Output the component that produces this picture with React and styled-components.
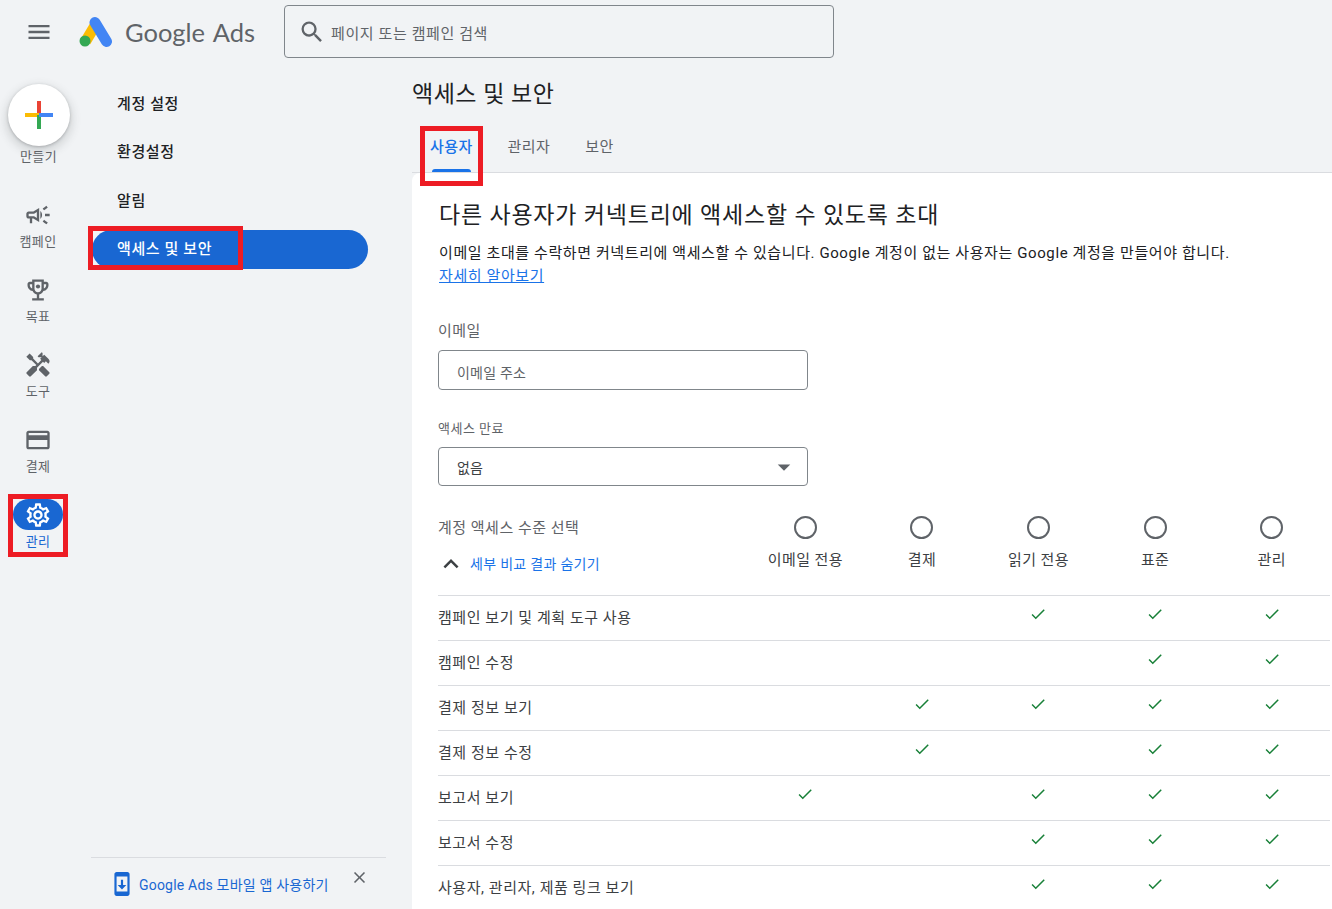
import React from "react";
import styled, { createGlobalStyle } from "styled-components";
import {
  MdMenu,
  MdSearch,
  MdOutlineCampaign,
  MdHandyman,
  MdCreditCard,
  MdOutlineSettings,
  MdExpandLess,
  MdCheck,
  MdClose,
  MdArrowDropDown,
  MdSystemUpdate,
} from "react-icons/md";

const GlobalStyle = createGlobalStyle`
  html, body {
    margin: 0;
    padding: 0;
    background: #f1f3f4;
  }
  body {
    font-family: Roboto, "Noto Sans CJK KR", sans-serif;
    color: #202124;
  }
`;

const Page = styled.div`
  width: 1332px;
  height: 909px;
  overflow: hidden;
  display: flex;
  flex-direction: column;
  background: #f1f3f5;
`;

const Header = styled.header`
  height: 63px;
  flex: none;
  display: flex;
  align-items: center;
  padding-left: 25px;
  box-sizing: border-box;
`;

const MenuButton = styled.div`
  width: 28px;
  height: 28px;
  color: #5f6368;
  display: flex;
  font-size: 28px;
  margin-right: 26px;
`;

const LogoMark = styled.svg`
  width: 34px;
  height: 32px;
  flex: none;
  margin-right: 12px;
`;

const LogoText = styled.div`
  font-family: Lato, sans-serif;
  font-size: 25.5px;
  color: #5f6368;
  width: 159px;
  white-space: nowrap;
  word-spacing: 2px;
`;

const SearchBox = styled.div`
  width: 550px;
  height: 53px;
  box-sizing: border-box;
  border: 1px solid #80868b;
  border-radius: 4px;
  display: flex;
  align-items: center;
  padding-left: 13px;
  gap: 5px;
  color: #5f6368;
  font-size: 15px;
  letter-spacing: 0.6px;
`;

const SearchText = styled.span`
  padding-top: 2px;
`;

const Body = styled.div`
  flex: 1;
  display: flex;
  min-height: 0;
`;

const Rail = styled.nav`
  width: 76px;
  flex: none;
  display: flex;
  flex-direction: column;
  align-items: center;
  padding-top: 21px;
  box-sizing: border-box;
`;

const Fab = styled.div`
  width: 62px;
  height: 62px;
  margin-left: 2px;
  border-radius: 50%;
  background: #fff;
  box-shadow: 0 1px 3px rgba(60, 64, 67, 0.3), 0 4px 8px 3px rgba(60, 64, 67, 0.15);
  display: flex;
  align-items: center;
  justify-content: center;
  flex: none;
`;

const FabLabel = styled.div`
  font-size: 13px;
  letter-spacing: 0.3px;
  line-height: 18px;
  color: #5f6368;
  margin: 2px 0 33px 1px;
`;

const RailItem = styled.div`
  position: relative;
  height: 75px;
  flex: none;
  display: flex;
  flex-direction: column;
  align-items: center;
  font-size: 13px;
  letter-spacing: 0.3px;
  line-height: 18px;
  color: ${(p) => (p.$active ? "#1967d2" : "#5f6368")};
`;

const RailIcon = styled.div`
  width: 50px;
  height: 31px;
  border-radius: 16px;
  display: flex;
  align-items: center;
  justify-content: center;
  font-size: 28px;
  margin-bottom: 3px;
  background: ${(p) => (p.$active ? "#1967d2" : "transparent")};
  color: ${(p) => (p.$active ? "#fff" : "#5f6368")};
`;

const RailCallout = styled.div`
  position: absolute;
  left: -5px;
  top: -5px;
  width: 60px;
  height: 63px;
  box-sizing: border-box;
  border: 5px solid #ed1c24;
`;

const SubNav = styled.aside`
  width: 336px;
  flex: none;
  display: flex;
  flex-direction: column;
  padding: 21px 44px 0 16px;
  box-sizing: border-box;
  gap: 9.5px;
`;

const NavItem = styled.div`
  position: relative;
  height: 39px;
  flex: none;
  border-radius: 20px;
  padding: 0 0 3px 25px;
  box-sizing: border-box;
  display: flex;
  align-items: center;
  font-size: 15px;
  letter-spacing: 0.6px;
  font-weight: 500;
  background: ${(p) => (p.$active ? "#1967d2" : "transparent")};
  color: ${(p) => (p.$active ? "#fff" : "#202124")};
`;

const NavCallout = styled.div`
  position: absolute;
  left: -4px;
  top: -4px;
  width: 155px;
  height: 44px;
  box-sizing: border-box;
  border: 5px solid #ed1c24;
`;

const Promo = styled.div`
  margin-top: auto;
  margin-left: -1px;
  margin-right: -18px;
  height: 51px;
  flex: none;
  border-top: 1px solid #dadce0;
  display: flex;
  align-items: flex-start;
  padding-left: 18px;
  color: #1967d2;
  font-size: 14px;
  letter-spacing: 0.2px;
`;

const PromoIcon = styled.div`
  font-size: 26px;
  line-height: 0;
  margin-top: 13px;
  margin-right: 4px;
`;

const PromoText = styled.div`
  margin-top: 16px;
  white-space: nowrap;
`;

const PromoClose = styled.div`
  font-size: 19px;
  line-height: 0;
  color: #5f6368;
  margin: 10px 0 0 21px;
`;

const Main = styled.main`
  flex: 1;
  display: flex;
  flex-direction: column;
  min-width: 0;
`;

const PageTitle = styled.h1`
  margin: 15px 0 0 0;
  font-size: 23px;
  letter-spacing: 0.5px;
  line-height: 34px;
  font-weight: 400;
  color: #202124;
`;

const Tabs = styled.div`
  display: flex;
  gap: 35px;
  padding-left: 18px;
  margin-top: 14px;
  height: 46px;
  border-bottom: 1px solid #dadce0;
`;

const Tab = styled.div`
  position: relative;
  font-size: 15px;
  letter-spacing: 0.4px;
  line-height: 42px;
  font-weight: ${(p) => (p.$active ? 500 : 400)};
  color: ${(p) => (p.$active ? "#1a73e8" : "#5f6368")};
  ${(p) =>
    p.$active &&
    `&::after {
      content: "";
      position: absolute;
      left: 2px;
      right: 2px;
      bottom: 0;
      height: 3px;
      border-radius: 3px 3px 0 0;
      background: #1a73e8;
    }`}
`;

const TabCallout = styled.div`
  position: absolute;
  left: -10px;
  top: 0;
  width: 63px;
  height: 60px;
  box-sizing: border-box;
  border: 5px solid #ed1c24;
`;

const Card = styled.section`
  flex: 1;
  background: #fff;
  border-top-left-radius: 8px;
  padding: 25px 0 0 26px;
  min-height: 0;
`;

const CardTitle = styled.h2`
  margin: 0 0 0 1px;
  font-size: 23px;
  letter-spacing: 0.8px;
  line-height: 36px;
  font-weight: 400;
  color: #202124;
`;

const Description = styled.p`
  margin: 8px 0 0 1px;
  font-size: 15px;
  letter-spacing: 0.6px;
  line-height: 22.5px;
  color: #202124;
`;

const LearnMore = styled.a`
  color: #1a73e8;
  text-decoration: underline;
`;

const FieldLabel = styled.div`
  margin-top: ${(p) => p.$top}px;
  font-size: ${(p) => p.$size}px;
  letter-spacing: 0.5px;
  line-height: 20px;
  color: #5f6368;
`;

const Field = styled.div`
  width: 370px;
  height: ${(p) => p.$height}px;
  margin-top: ${(p) => p.$top}px;
  box-sizing: border-box;
  border: 1px solid #80868b;
  border-radius: 4px;
  display: flex;
  align-items: center;
  justify-content: space-between;
  padding: ${(p) => (p.$muted ? "3px 12px 0 18px" : "0 12px 0 18px")};
  font-size: 14px;
  letter-spacing: 0.2px;
  color: ${(p) => (p.$muted ? "#5f6368" : "#3c4043")};
`;

const CaretIcon = styled.div`
  font-size: 30px;
  line-height: 0;
  color: #5f6368;
  margin-right: -4px;
`;

const Grid = styled.div`
  display: grid;
  grid-template-columns: 309px repeat(5, 116.6px);
  margin-top: 24px;
`;

const PickerIntro = styled.div`
  height: 85px;
  padding-top: 8px;
  box-sizing: border-box;
  font-size: 15px;
  letter-spacing: 0.5px;
  line-height: 20px;
  color: #5f6368;
`;

const ToggleRow = styled.div`
  display: flex;
  align-items: center;
  margin-top: 11px;
  gap: 4px;
  font-size: 14px;
  letter-spacing: 0.3px;
  color: #1a73e8;
`;

const ChevronIcon = styled.div`
  font-size: 30px;
  line-height: 0;
  color: #3c4043;
  margin-left: -2px;
`;

const LevelCell = styled.div`
  height: 85px;
  display: flex;
  flex-direction: column;
  align-items: center;
  padding-top: 6px;
  box-sizing: border-box;
  font-size: 15px;
  letter-spacing: 0.4px;
  color: #3c4043;
`;

const Radio = styled.div`
  width: 23px;
  height: 23px;
  box-sizing: border-box;
  border: 2.5px solid #5f6368;
  border-radius: 50%;
  margin-bottom: 9px;
`;

const RowLabel = styled.div`
  height: 45px;
  box-sizing: border-box;
  border-top: 1px solid #dadce0;
  display: flex;
  align-items: center;
  padding-bottom: 4px;
  font-size: 15px;
  letter-spacing: 0.55px;
  color: #3c4043;
`;

const RowCell = styled.div`
  height: 45px;
  box-sizing: border-box;
  border-top: 1px solid #dadce0;
  display: flex;
  justify-content: center;
  padding-top: 9px;
  font-size: 18px;
  color: #188038;
`;

const levels = ["이메일 전용", "결제", "읽기 전용", "표준", "관리"];

const permissions = [
  ["캠페인 보기 및 계획 도구 사용", [0, 0, 1, 1, 1]],
  ["캠페인 수정", [0, 0, 0, 1, 1]],
  ["결제 정보 보기", [0, 1, 1, 1, 1]],
  ["결제 정보 수정", [0, 1, 0, 1, 1]],
  ["보고서 보기", [1, 0, 1, 1, 1]],
  ["보고서 수정", [0, 0, 1, 1, 1]],
  ["사용자, 관리자, 제품 링크 보기", [0, 0, 1, 1, 1]],
];

const navItems = ["계정 설정", "환경설정", "알림"];

const AdsLogo = () => (
  <LogoMark viewBox="0 0 34 32">
    <line x1="17" y1="8" x2="6.5" y2="25.5" stroke="#fbbc04" strokeWidth="11" />
    <circle cx="6" cy="25" r="5.5" fill="#34a853" />
    <line x1="16" y1="6.5" x2="27.5" y2="25.5" stroke="#4285f4" strokeWidth="11" strokeLinecap="round" />
  </LogoMark>
);

const PlusIcon = () => (
  <svg width="28" height="28" viewBox="0 0 28 28">
    <rect x="12" y="0" width="4" height="14" fill="#ea4335" />
    <rect x="0" y="12" width="14" height="4" fill="#fbbc04" />
    <rect x="12" y="14" width="4" height="14" fill="#34a853" />
    <rect x="14" y="12" width="14" height="4" fill="#4285f4" />
  </svg>
);

const TrophyIcon = () => (
  <svg width="28" height="28" viewBox="0 0 24 24" fill="currentColor">
    <path d="M19 5h-2V3H7v2H5c-1.1 0-2 .9-2 2v1c0 2.55 1.92 4.63 4.39 4.94.63 1.5 1.98 2.63 3.61 2.96V19H7v2h10v-2h-4v-3.1c1.63-.33 2.98-1.46 3.61-2.96C19.08 12.63 21 10.55 21 8V7c0-1.1-.9-2-2-2zM5 8V7h2v3.82C5.84 10.4 5 9.3 5 8zm7 6c-1.65 0-3-1.35-3-3V5h6v6c0 1.65-1.35 3-3 3zm7-6c0 1.3-.84 2.4-2 2.82V7h2v1z" />
    <circle cx="12" cy="9" r="1.8" />
  </svg>
);

const railItems = [
  ["캠페인", <MdOutlineCampaign />],
  ["목표", <TrophyIcon />],
  ["도구", <MdHandyman />],
  ["결제", <MdCreditCard />],
];

export default function App() {
  return (
    <Page>
      <GlobalStyle />
      <Header>
        <MenuButton>
          <MdMenu />
        </MenuButton>
        <AdsLogo />
        <LogoText>Google Ads</LogoText>
        <SearchBox>
          <MdSearch size={28} />
          <SearchText>페이지 또는 캠페인 검색</SearchText>
        </SearchBox>
      </Header>
      <Body>
        <Rail>
          <Fab>
            <PlusIcon />
          </Fab>
          <FabLabel>만들기</FabLabel>
          {railItems.map(([label, icon]) => (
            <RailItem key={label}>
              <RailIcon>{icon}</RailIcon>
              {label}
            </RailItem>
          ))}
          <RailItem $active>
            <RailIcon $active>
              <MdOutlineSettings />
            </RailIcon>
            관리
            <RailCallout />
          </RailItem>
        </Rail>
        <SubNav>
          {navItems.map((item) => (
            <NavItem key={item}>{item}</NavItem>
          ))}
          <NavItem $active>
            액세스 및 보안
            <NavCallout />
          </NavItem>
          <Promo>
            <PromoIcon>
              <MdSystemUpdate />
            </PromoIcon>
            <PromoText>Google Ads 모바일 앱 사용하기</PromoText>
            <PromoClose>
              <MdClose />
            </PromoClose>
          </Promo>
        </SubNav>
        <Main>
          <PageTitle>액세스 및 보안</PageTitle>
          <Tabs>
            <Tab $active>
              사용자
              <TabCallout />
            </Tab>
            <Tab>관리자</Tab>
            <Tab>보안</Tab>
          </Tabs>
          <Card>
            <CardTitle>다른 사용자가 커넥트리에 액세스할 수 있도록 초대</CardTitle>
            <Description>
              이메일 초대를 수락하면 커넥트리에 액세스할 수 있습니다. Google 계정이 없는 사용자는 Google 계정을 만들어야 합니다.
              <br />
              <LearnMore>자세히 알아보기</LearnMore>
            </Description>
            <FieldLabel $top={34} $size={15}>이메일</FieldLabel>
            <Field $top={9} $height={40} $muted>이메일 주소</Field>
            <FieldLabel $top={29} $size={13}>액세스 만료</FieldLabel>
            <Field $top={8} $height={39}>
              없음
              <CaretIcon>
                <MdArrowDropDown />
              </CaretIcon>
            </Field>
            <Grid>
              <PickerIntro>
                계정 액세스 수준 선택
                <ToggleRow>
                  <ChevronIcon>
                    <MdExpandLess />
                  </ChevronIcon>
                  세부 비교 결과 숨기기
                </ToggleRow>
              </PickerIntro>
              {levels.map((level) => (
                <LevelCell key={level}>
                  <Radio />
                  {level}
                </LevelCell>
              ))}
              {permissions.map(([label, marks]) => (
                <React.Fragment key={label}>
                  <RowLabel>{label}</RowLabel>
                  {marks.map((on, i) => (
                    <RowCell key={i}>{on ? <MdCheck /> : null}</RowCell>
                  ))}
                </React.Fragment>
              ))}
            </Grid>
          </Card>
        </Main>
      </Body>
    </Page>
  );
}
